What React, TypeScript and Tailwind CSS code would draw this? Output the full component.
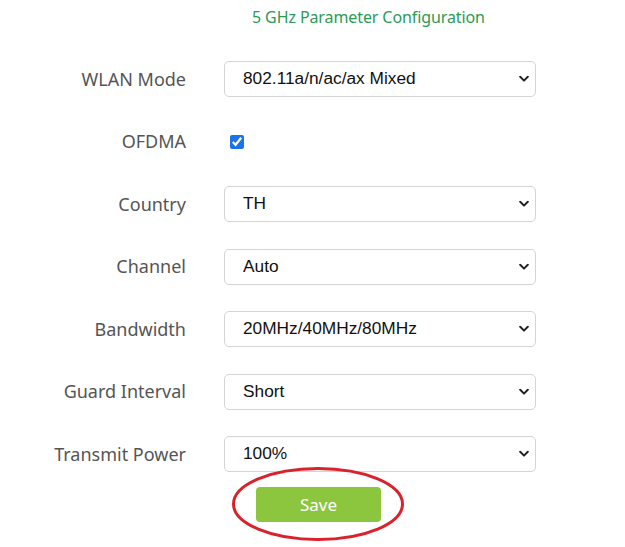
import React from "react";

const labelFont = { fontFamily: '"Noto Sans", "Open Sans", sans-serif' };

function Chevron() {
  return (
    <svg className="pointer-events-none absolute right-[7px] top-1/2 -translate-y-1/2" width="10" height="7" viewBox="0 0 10 7">
      <path d="M1.2 1.3 L5 5.1 L8.8 1.3" fill="none" stroke="#222" strokeWidth="2" strokeLinecap="round" strokeLinejoin="round" />
    </svg>
  );
}

function SelectBox({ value }: { value: string }) {
  return (
    <div className="relative w-[312px] h-[36px]">
      <select
        defaultValue={value}
        className="appearance-none w-full h-full rounded-[5px] border border-[#d4d4d4] bg-white pl-[18px] text-[17.3px] text-[#111] outline-none"
        style={{ fontFamily: '"Liberation Sans", Arial, sans-serif' }}
      >
        <option>{value}</option>
      </select>
      <Chevron />
    </div>
  );
}

function Row({ label, children }: { label: string; children: React.ReactNode }) {
  return (
    <div className="flex items-center h-[36px]">
      <div className="w-[186px] text-right text-[18px] text-[#555]" style={labelFont}>
        {label}
      </div>
      <div className="ml-[38px] flex items-center">{children}</div>
    </div>
  );
}

export default function App() {
  return (
    <div className="w-[625px] h-[547px] bg-white relative overflow-hidden">
      <div className="pt-[4px] pl-[252px] text-[16px] text-[#2b9a56] leading-[26px] tracking-[-0.1px]" style={labelFont}>
        5 GHz Parameter Configuration
      </div>
      <div className="mt-[31px] flex flex-col gap-[26.5px]">
        <Row label="WLAN Mode"><SelectBox value="802.11a/n/ac/ax Mixed" /></Row>
        <Row label="OFDMA">
          <input type="checkbox" defaultChecked className="ml-[6px] w-[14px] h-[14px] accent-[#1a73e8]" />
        </Row>
        <Row label="Country"><SelectBox value="TH" /></Row>
        <Row label="Channel"><SelectBox value="Auto" /></Row>
        <Row label="Bandwidth"><SelectBox value="20MHz/40MHz/80MHz" /></Row>
        <Row label="Guard Interval"><SelectBox value="Short" /></Row>
        <Row label="Transmit Power"><SelectBox value="100%" /></Row>
      </div>
      <div className="mt-[15px] pl-[256px]">
        <button
          className="w-[125px] h-[35px] rounded-[4px] bg-[#8cc63f] text-white text-[17px]"
          style={labelFont}
        >
          Save
        </button>
      </div>
      <svg className="absolute left-[231px] top-[466px]" width="174" height="76" viewBox="0 0 174 76">
        <ellipse cx="87" cy="38" rx="84.5" ry="35.5" fill="none" stroke="#d8222c" strokeWidth="3" />
      </svg>
    </div>
  );
}
